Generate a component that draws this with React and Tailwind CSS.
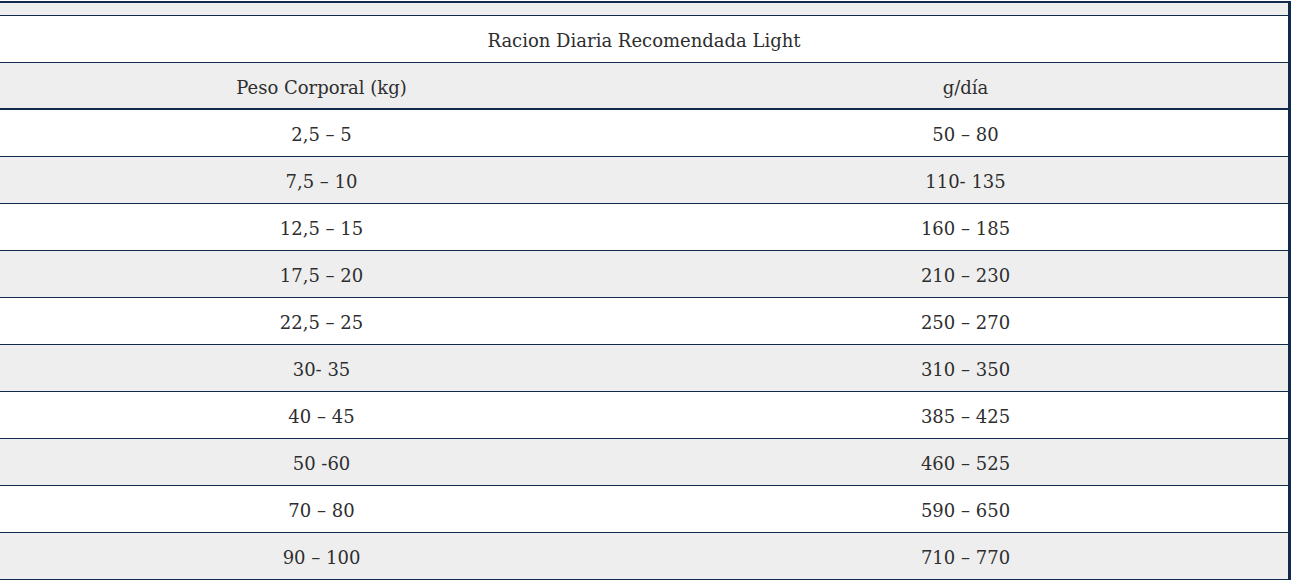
export default function App() {
  const rows = [
    ["2,5 – 5", "50 – 80"],
    ["7,5 – 10", "110- 135"],
    ["12,5 – 15", "160 – 185"],
    ["17,5 – 20", "210 – 230"],
    ["22,5 – 25", "250 – 270"],
    ["30- 35", "310 – 350"],
    ["40 – 45", "385 – 425"],
    ["50 -60", "460 – 525"],
    ["70 – 80", "590 – 650"],
    ["90 – 100", "710 – 770"],
  ];
  const font = { fontFamily: '"DejaVu Serif", serif' };
  return (
    <div className="w-[1291px] h-[580px] overflow-hidden bg-white text-[#2e2e2e] text-[18px]" style={font}>
      <div className="w-[1291px] border-t-2 border-r-[3px] border-[#0f2a4a] mt-px">
        <div className="h-[13px] bg-[#eeeeee] border-b border-[#0f2a4a]"></div>
        <div className="h-[47px] flex items-center justify-center pt-[3px] border-b border-[#0f2a4a]">
          Racion Diaria Recomendada Light
        </div>
        <div className="h-[47px] flex bg-[#eeeeee] pt-[3px] border-b-2 border-[#0f2a4a]">
          <div className="w-[643px] flex items-center justify-center">Peso Corporal (kg)</div>
          <div className="flex-1 flex items-center justify-center">g/día</div>
        </div>
        {rows.map((r, i) => (
          <div
            key={i}
            className={`h-[47px] flex pt-[3px] border-b border-[#0f2a4a] ${i % 2 === 1 ? "bg-[#eeeeee]" : "bg-white"}`}
          >
            <div className="w-[643px] flex items-center justify-center">{r[0]}</div>
            <div className="flex-1 flex items-center justify-center">{r[1]}</div>
          </div>
        ))}
      </div>
    </div>
  );
}
